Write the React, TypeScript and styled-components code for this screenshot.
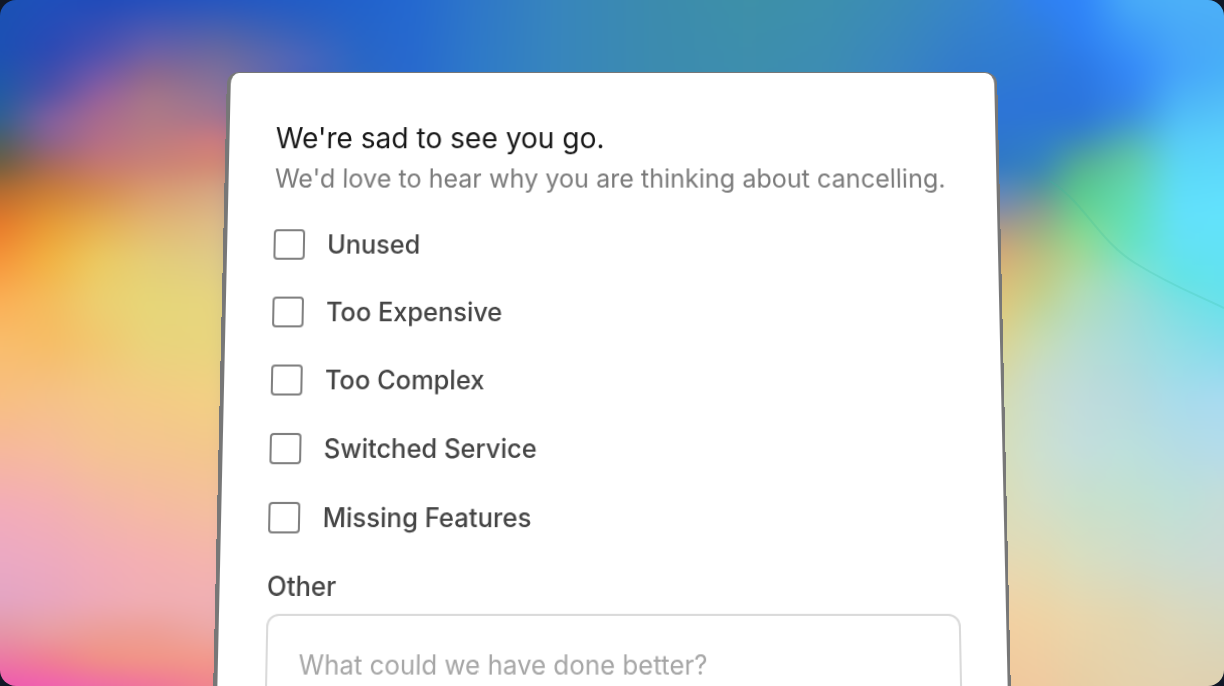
import React from "react";
import styled, { createGlobalStyle } from "styled-components";

const GlobalStyle = createGlobalStyle`
  * { box-sizing: border-box; }
  body {
    margin: 0;
    background: #111827;
    font-family: Inter, "Liberation Sans", sans-serif;
    -webkit-font-smoothing: antialiased;
  }
`;

const Stage = styled.main`
  position: relative;
  display: flex;
  justify-content: center;
  align-items: flex-start;
  height: 100vh;
  padding: 72px 16px 0;
  overflow: hidden;
  border-radius: 16px;
`;

const Backdrop = styled.svg`
  position: absolute;
  inset: 0;
  width: 100%;
  height: 100%;
`;

const Card = styled.form`
  position: relative;
  width: 100%;
  max-width: 770px;
  padding: 45px 44px 48px 46px;
  background: #fff;
  border: solid #777;
  border-width: 1px 3px 0 4px;
  border-radius: 12px;
  transform: perspective(900px) rotateX(3deg);
  transform-origin: top center;
`;

const Title = styled.h1`
  margin: 0;
  font-size: 28px;
  line-height: 40px;
  font-weight: 400;
  color: #171717;
`;

const Subtitle = styled.p`
  margin: 0 0 30px;
  font-size: 25px;
  line-height: 40px;
  color: #7a7a7a;
`;

const Reasons = styled.fieldset`
  display: flex;
  flex-direction: column;
  gap: 36px;
  margin: 0 0 32px;
  padding: 0;
  border: 0;
`;

const Reason = styled.label`
  display: flex;
  align-items: center;
  gap: 22px;
  font-size: 25px;
  line-height: 30px;
  font-weight: 500;
  color: #444;
`;

const Tick = styled.input`
  appearance: none;
  flex: none;
  width: 31px;
  height: 30px;
  margin: 0;
  border: 2px solid #808080;
  border-radius: 4px;
  background: #fff;
  &:checked { background: #444; }
`;

const FieldLabel = styled.label`
  display: block;
  margin-bottom: 8px;
  font-size: 25px;
  line-height: 36px;
  font-weight: 500;
  color: #444;
`;

const Comment = styled.textarea`
  display: block;
  width: 100%;
  height: 140px;
  padding: 28px 30px;
  border: 2px solid #dadada;
  border-radius: 12px;
  resize: none;
  font: inherit;
  font-size: 25px;
  line-height: 36px;
  color: #444;
  &::placeholder { color: #a6a6a6; opacity: 1; }
`;

type Stop = [number, string];

// Each column is a vertical run of colours; neighbours cross-fade into each other.
const columns: { x: number; stops: Stop[] }[] = [
  { x: 0, stops: [[0, "#1a52b4"], [50, "#1c50b4"], [90, "#1f5aa6"], [120, "#2f6090"], [140, "#4a5f62"], [165, "#6d5d3e"], [190, "#b36a30"], [225, "#e87a2a"], [260, "#f6953a"], [300, "#fbaf55"], [343, "#f9bd6c"], [400, "#f8bf82"], [450, "#f6b89c"], [510, "#f3acba"], [560, "#eba9c4"], [600, "#e3a5c4"], [630, "#e498a8"], [660, "#ec78a4"], [686, "#ee58b0"]] },
  { x: 50, stops: [[0, "#1f4fbb"], [50, "#2c4ab4"], [90, "#4d50a8"], [120, "#8560a0"], [140, "#8a6290"], [165, "#a8695a"], [190, "#c97c38"], [225, "#e89c36"], [260, "#f2b343"], [300, "#f4bc5c"], [343, "#f6bd66"], [400, "#f5c188"], [450, "#f6bc9c"], [510, "#f3afb4"], [560, "#edaabf"], [600, "#e8a6bf"], [630, "#e8a0a4"], [660, "#f07f90"], [686, "#f05fb2"]] },
  { x: 100, stops: [[0, "#1f4bba"], [50, "#4b50b0"], [75, "#7458a8"], [100, "#9b629a"], [120, "#a96c8c"], [140, "#b56e88"], [165, "#c57870"], [190, "#d38a50"], [225, "#e6b052"], [260, "#ebca62"], [300, "#eccf70"], [343, "#f1c870"], [400, "#f5c787"], [450, "#f5c393"], [510, "#f3b6aa"], [560, "#f2adb8"], [600, "#eeaab8"], [630, "#ec9f9a"], [660, "#f19082"], [686, "#ef6aa8"]] },
  { x: 150, stops: [[0, "#234fbd"], [50, "#6b5fa8"], [75, "#90688c"], [100, "#a87888"], [120, "#b07a86"], [140, "#bc7c80"], [165, "#cb8276"], [190, "#d99a6e"], [225, "#e2b872"], [260, "#e4cd78"], [300, "#e6d678"], [343, "#e9d47c"], [400, "#f4cb85"], [450, "#f4c591"], [510, "#f5baa3"], [560, "#f4b0b2"], [600, "#f0aeb4"], [630, "#ed9f98"], [660, "#f29684"], [686, "#f0729c"]] },
  { x: 220, stops: [[0, "#2456c0"], [50, "#68689f"], [75, "#80709a"], [100, "#957496"], [120, "#a8748e"], [140, "#cf7a7e"], [165, "#d38872"], [190, "#d5a684"], [225, "#ddbd88"], [260, "#dfcb88"], [300, "#e6d480"], [343, "#e8d57e"], [400, "#f2d084"], [450, "#f3c78c"], [510, "#f4bf9e"], [560, "#f4b5ac"], [600, "#f0b0b4"], [630, "#ecaaa8"], [660, "#f3998a"], [686, "#f0868c"]] },
  { x: 300, stops: [[0, "#215cc6"], [30, "#3561bc"], [60, "#4f66ba"], [80, "#4a62b8"]] },
  { x: 360, stops: [[0, "#2162cc"], [80, "#2e68c2"]] },
  { x: 410, stops: [[0, "#2468d0"], [80, "#2869ce"]] },
  { x: 480, stops: [[0, "#2f78c8"], [80, "#2f7bc8"]] },
  { x: 560, stops: [[0, "#3886bc"], [80, "#3886bc"]] },
  { x: 650, stops: [[0, "#3c8bae"], [80, "#3c8bb0"]] },
  { x: 750, stops: [[0, "#3e90a8"], [80, "#3e8eae"]] },
  { x: 830, stops: [[0, "#3d8fae"], [80, "#3d8cb4"]] },
  { x: 900, stops: [[0, "#3b8bb8"], [80, "#3984c2"]] },
  { x: 960, stops: [[0, "#3886c8"], [70, "#327bcc"], [120, "#2e76d2"], [170, "#3079c4"], [200, "#7888b0"], [250, "#d2a678"], [310, "#dfca7e"], [400, "#dcd8a0"], [500, "#e0d8b0"], [600, "#f2d0a2"], [686, "#f1c89c"]] },
  { x: 1000, stops: [[0, "#3583d6"], [70, "#2f7bd0"], [110, "#2d74d8"], [165, "#3079c4"], [185, "#5585c0"], [205, "#7888b0"], [225, "#a8968c"], [250, "#d2a678"], [280, "#dcbc78"], [310, "#dfca7e"], [343, "#dbd494"], [400, "#d5dcb4"], [450, "#d6debc"], [500, "#dbddb8"], [540, "#e0dbb8"], [580, "#ecd6ae"], [620, "#f2d0a2"], [686, "#f1c89c"]] },
  { x: 1040, stops: [[0, "#2f80f0"], [35, "#307edc"], [70, "#2f78d8"], [110, "#2c74d8"], [150, "#317fc8"], [170, "#3a86b8"], [190, "#5a949a"], [210, "#8c9c90"], [235, "#a2b482"], [260, "#c0c080"], [290, "#c4ce88"], [320, "#c2d8a4"], [343, "#c8dcb4"], [380, "#c8dccc"], [450, "#cce0d0"], [500, "#d4dfc8"], [560, "#e2dbb4"], [620, "#efd3a4"], [686, "#f0caa0"]] },
  { x: 1080, stops: [[0, "#2f84fa"], [35, "#2e80f4"], [70, "#2c78e4"], [110, "#2c74dc"], [130, "#327fcc"], [150, "#4698a8"], [170, "#58b490"], [190, "#58c88e"], [210, "#68d090"], [235, "#8cd890"], [260, "#a6d898"], [290, "#b2dcb4"], [320, "#b4dcc4"], [343, "#b8dcd0"], [400, "#c0dcdc"], [450, "#c4dedc"], [500, "#c9e0cc"], [560, "#d9dec0"], [620, "#ead6ac"], [686, "#e8cea4"]] },
  { x: 1130, stops: [[0, "#48aaf8"], [35, "#3c98f8"], [70, "#3488f8"], [100, "#3686ec"], [120, "#3e94d8"], [140, "#50b0b8"], [160, "#60c8a4"], [190, "#62d8b0"], [220, "#62e0b8"], [250, "#6ae2c4"], [270, "#84e2cc"], [300, "#9cdcd4"], [343, "#a6dcdc"], [400, "#b6dade"], [450, "#bce0dc"], [500, "#c4e0d0"], [560, "#d2dcc8"], [620, "#e2d6b0"], [686, "#e5d2ac"]] },
  { x: 1180, stops: [[0, "#4cb0f8"], [35, "#48a8f8"], [70, "#46a4fa"], [100, "#4cb4f8"], [140, "#58ccf8"], [175, "#5cdaf8"], [210, "#62e0fc"], [245, "#64e2f4"], [280, "#62e4e4"], [300, "#78e0e4"], [343, "#90dee6"], [400, "#a8dcec"], [450, "#b6dce4"], [500, "#bee0d8"], [560, "#ccdcd0"], [620, "#dcd8bc"], [686, "#e2d2b0"]] },
  { x: 1224, stops: [[0, "#4cb0f8"], [35, "#4aacf6"], [70, "#48b0f8"], [100, "#52bcf8"], [140, "#5ad0fa"], [210, "#62e2fc"], [260, "#62e2f4"], [300, "#66e2ea"], [343, "#82dcec"], [400, "#a8daf0"], [450, "#b4dcea"], [500, "#c4dcd8"], [560, "#ccdad4"], [620, "#d6d8c0"], [686, "#dfd0b0"]] },
];

const W = 1224;
const H = 686;
// Paint runs past the edges so that the blur never thins out inside the view.
const BLEED = 40;
const area = { x: -BLEED, y: -BLEED, width: W + 2 * BLEED, height: H + 2 * BLEED };

function Wallpaper() {
  return (
    <Backdrop viewBox={`0 0 ${W} ${H}`} preserveAspectRatio="none" aria-hidden="true">
      <filter id="soften" filterUnits="userSpaceOnUse" {...area} colorInterpolationFilters="sRGB">
        <feGaussianBlur stdDeviation="9" />
      </filter>
      <g filter="url(#soften)">
        {columns.map((col, i) => {
          const from = i ? columns[i - 1].x : -BLEED;
          const to = columns[i + 1] ? columns[i + 1].x : W + BLEED;
          const strip = { x: from, y: -BLEED, width: to - from, height: H + 2 * BLEED };
          return (
            <g key={col.x}>
              <linearGradient id={`tone${i}`} gradientUnits="userSpaceOnUse" x1="0" y1="0" x2="0" y2={H}>
                {col.stops.map(([y, color]) => (
                  <stop key={y} offset={y / H} stopColor={color} />
                ))}
              </linearGradient>
              {i > 0 && (
                <>
                  <linearGradient id={`fade${i}`} gradientUnits="userSpaceOnUse" x1={from} y1="0" x2={col.x} y2="0">
                    <stop offset="0" stopColor="#fff" stopOpacity="0" />
                    <stop offset="1" stopColor="#fff" />
                  </linearGradient>
                  <mask id={`mask${i}`} maskUnits="userSpaceOnUse" {...area} style={{ maskType: "alpha" }}>
                    <rect {...strip} fill={`url(#fade${i})`} />
                  </mask>
                </>
              )}
              <rect {...strip} fill={`url(#tone${i})`} mask={i > 0 ? `url(#mask${i})` : undefined} />
            </g>
          );
        })}
      </g>
      <path
        d="M1050 181 C1085 203 1098 240 1135 263 S1195 294 1224 308"
        fill="none"
        stroke="#35b99a"
        strokeOpacity="0.2"
        strokeWidth="2"
      />
    </Backdrop>
  );
}

const reasons = ["Unused", "Too Expensive", "Too Complex", "Switched Service", "Missing Features"];

export default function App() {
  return (
    <>
      <GlobalStyle />
      <Stage>
        <Wallpaper />
        <Card>
          <Title>We're sad to see you go.</Title>
          <Subtitle>We'd love to hear why you are thinking about cancelling.</Subtitle>
          <Reasons aria-label="Reasons for cancelling">
            {reasons.map((reason) => (
              <Reason key={reason}>
                <Tick type="checkbox" name="reason" value={reason} />
                {reason}
              </Reason>
            ))}
          </Reasons>
          <FieldLabel htmlFor="other">Other</FieldLabel>
          <Comment id="other" placeholder="What could we have done better?" />
        </Card>
      </Stage>
    </>
  );
}
